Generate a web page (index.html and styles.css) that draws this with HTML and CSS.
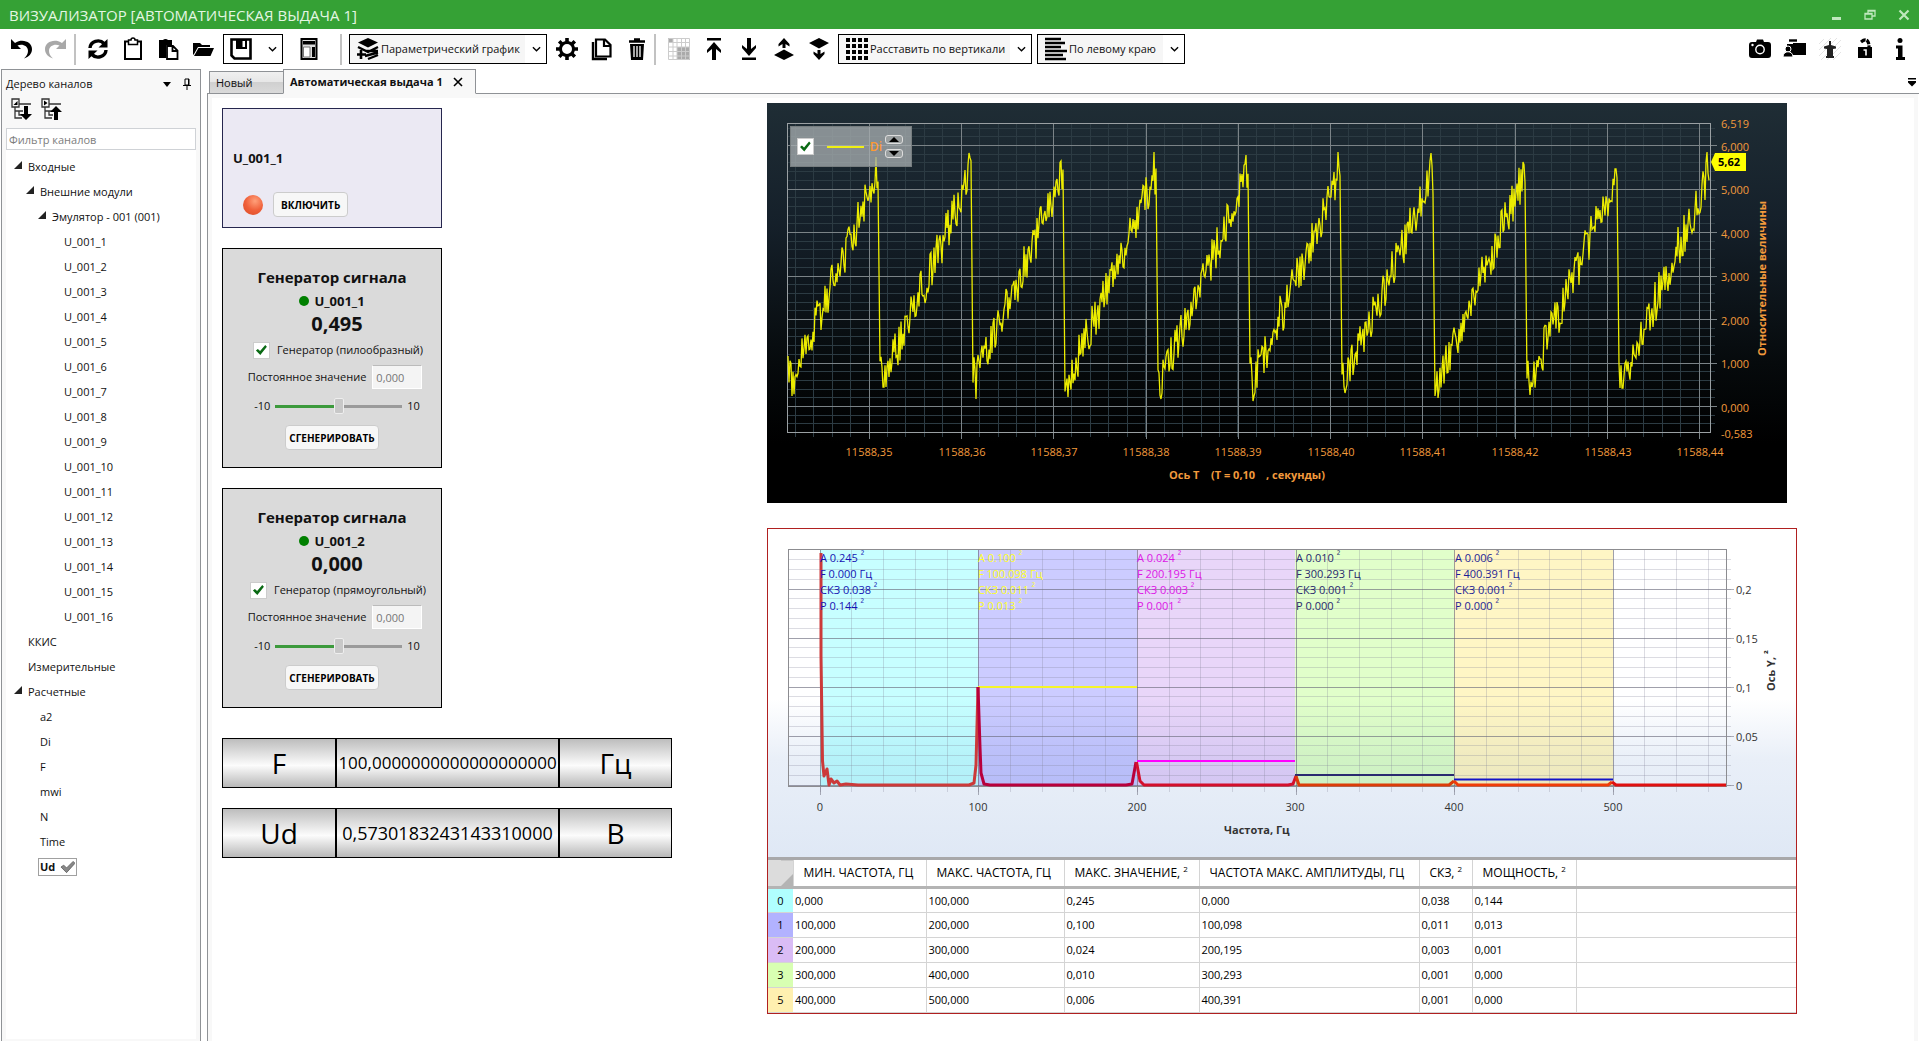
FILE: index.html
```html
<!DOCTYPE html>
<html lang="ru">
<head>
<meta charset="utf-8">
<title>Визуализатор</title>
<link rel="stylesheet" href="styles.css">
</head>
<body>
<header class="titlebar">
  <h1 class="titlebar-name">ВИЗУАЛИЗАТОР [АВТОМАТИЧЕСКАЯ ВЫДАЧА 1]</h1>
  <div class="window-buttons">
    <button aria-label="Свернуть"><svg viewBox="0 0 12 12"><path d="M2 8h9v3H2z" fill="#bfe8bd"/></svg></button>
    <button aria-label="Восстановить"><svg viewBox="0 0 12 12"><path d="M4 4V1.500h7V7H8.500M1 4.500h7V10H1zM4 2h7M1 5h7" fill="none" stroke="#bfe8bd" stroke-width="1.300"/></svg></button>
    <button aria-label="Закрыть"><svg viewBox="0 0 12 12"><path d="M1.500 1.500l9 9m0-9l-9 9" stroke="#bfe8bd" stroke-width="2.200"/></svg></button>
  </div>
</header>

<div class="toolbar">
  <div class="tool-group">
    <button class="tool" aria-label="Отменить"><svg viewBox="0 0 22 22"><path d="M1 1v10h10l-3.500-3.500C12 5.500 18 7.500 18 13c0 3-1.500 5-4 7.500 5-1.500 8-5 8-9.500C22 4.500 13 0 5 5z" /></svg></button>
    <button class="tool" aria-label="Повторить"><svg viewBox="0 0 22 22" fill="#a8a8a8"><path d="M21 1v10H11l3.500-3.500C10 5.500 4 7.500 4 13c0 3 1.500 5 4 7.500C3 19 0 15.500 0 11 0 4.500 9 0 17 5z"/></svg></button>
  </div>
  <span class="divider"></span>
  <div class="tool-group">
    <button class="tool" aria-label="Обновить"><svg viewBox="0 0 22 22"><path d="M3 10a8 7.500 0 0 1 14-4.500M19 12a8 7.500 0 0 1-14 4.500" fill="none" stroke="#000" stroke-width="3.400"/><path d="M20.500 1v8.500h-9zM1.500 21v-8.500h9z"/></svg></button>
    <button class="tool" aria-label="Буфер"><svg viewBox="0 0 22 22"><path d="M3 3.500h16v17.500H3z" fill="#fff" stroke="#000" stroke-width="2"/><path d="M6.500 2H9a2 2 0 0 1 4 0h2.500v4.500h-9z" fill="#fff" stroke="#000" stroke-width="1.500"/></svg></button>
    <button class="tool" aria-label="Вставить"><svg viewBox="0 0 22 22"><path d="M2 2h4a3 2 0 0 1 5 0h4v5H9v13H2z"/><path d="M10 8h6l4.500 4.500V21H10zM15.500 8v5H20" fill="#fff" stroke="#000" stroke-width="1.800"/></svg></button>
    <button class="tool" aria-label="Открыть"><svg viewBox="0 0 22 22"><path d="M1 17V5h7l2 2h8v2H6l-4 7z"/><path d="M6.500 10H22l-3.500 8H2z"/></svg></button>
  </div>
  <div class="boxed save-box">
    <button class="tool-in-box" aria-label="Сохранить"><svg viewBox="0 0 22 22"><path d="M1.500 1.500h19v19h-16l-3-3z" fill="#fff" stroke="#000" stroke-width="2.600"/><path d="M6 2h11v9H6z"/><path d="M12.500 3h2.500v6h-2.500z" fill="#fff"/></svg></button>
    <button class="chevron" aria-label="Варианты сохранения"><svg viewBox="0 0 10 6"><path d="M1 1l4 4 4-4" fill="none" stroke="#000" stroke-width="1.500"/></svg></button>
  </div>
  <button class="tool report" aria-label="Отчёт"><svg viewBox="0 0 22 22"><path d="M3.500 1h15v20h-15z" fill="#ddd" stroke="#000" stroke-width="2"/><path d="M5 3h12v3.500H5z"/><path d="M5.500 9h6.500v10H5.500z" fill="#fff" stroke="#777"/><path d="M14 9h3v10h-3z"/></svg></button>
  <span class="divider report-divider"></span>
  <div class="boxed combo combo-chart">
    <svg class="combo-icon" viewBox="0 0 22 22"><path d="M11 0l10 4.500-10 5-10-5z"/><path d="M1 9l10 5 10-5M9 13l12 0M8 18l13-3.500M11 21l10-4" fill="none" stroke="#000" stroke-width="2.400"/><path d="M4 12v9M0 16.500h9" stroke="#000" stroke-width="2.600"/></svg>
    <select aria-label="Тип графика"><option>Параметрический график</option></select>
    <svg class="combo-arrow" viewBox="0 0 10 6"><path d="M1 1l4 4 4-4" fill="none" stroke="#000" stroke-width="1.500"/></svg>
  </div>
  <div class="tool-group">
    <button class="tool" aria-label="Настройки"><svg viewBox="0 0 22 22"><circle cx="11" cy="11" r="6.500" fill="none" stroke="#000" stroke-width="3"/><path d="M11 0v4M11 18v4M0 11h4M18 11h4M3.200 3.200l3 3M15.800 15.800l3 3M3.200 18.800l3-3M15.800 6.200l3-3" stroke="#000" stroke-width="3.600"/></svg></button>
    <button class="tool" aria-label="Копировать"><svg viewBox="0 0 22 22"><path d="M2 4v17h14" fill="none" stroke="#000" stroke-width="2.400"/><path d="M5 1.500h9l5.500 5.500v11.500H5zM13 1.500V8h6" fill="#fff" stroke="#000" stroke-width="2.200"/></svg></button>
    <button class="tool" aria-label="Удалить"><svg viewBox="0 0 22 22"><path d="M3 3.500h16M8 1.500h6" stroke="#000" stroke-width="2.400"/><path d="M4 6h14l-1 16H5z"/><path d="M8 8v11M11 8v11M14 8v11" stroke="#fff" stroke-width="1.300"/></svg></button>
  </div>
  <span class="divider tight"></span>
  <div class="tool-group">
    <button class="tool" aria-label="Сетка"><svg viewBox="0 0 22 22"><path d="M0 0h5v4H0zM9 9h13v13H9z" fill="#aaa"/><path d="M.5 .5h21v21H.5zM5 0v22M9 0v22M13.500 0v22M17.500 0v22M0 4.500h22M0 9h22M0 13.500h22M0 18h22" fill="none" stroke="#ccc"/></svg></button>
    <button class="tool" aria-label="На передний план"><svg viewBox="0 0 22 22"><path d="M4 0h14v2.500H4zM11 4l7 8v3l-5-4v11H9V11l-5 4v-3z"/></svg></button>
    <button class="tool" aria-label="На задний план"><svg viewBox="0 0 22 22"><path d="M4 19.500h14V22H4zM11 18l7-8V7l-5 4V0H9v11L4 7v3z"/></svg></button>
    <button class="tool" aria-label="Переместить выше"><svg viewBox="0 0 22 22"><path d="M11 11.500L21 17l-10 5-10-5zM11 0l5.500 6v2.500L12.500 6v4h-3V6l-4 2.500V6z"/></svg></button>
    <button class="tool" aria-label="Переместить ниже"><svg viewBox="0 0 22 22"><path d="M11 0l10 5-10 5.500L1 5zM11 22l5.500-6v-2.500L12.500 16v-4h-3v4l-4-2.500V16z"/></svg></button>
  </div>
  <div class="boxed combo combo-place">
    <svg class="combo-icon" viewBox="0 0 22 22"><path d="M2 0v22M8 0v22M14 0v22M20 0v22" stroke="#000" stroke-width="4" stroke-dasharray="4 2"/></svg>
    <select aria-label="Расстановка"><option>Расставить по вертикали</option></select>
    <svg class="combo-arrow" viewBox="0 0 10 6"><path d="M1 1l4 4 4-4" fill="none" stroke="#000" stroke-width="1.500"/></svg>
  </div>
  <div class="boxed combo combo-align">
    <svg class="combo-icon" viewBox="0 0 22 22"><path d="M0 1h16M0 5h20M0 9h16M0 13h22M0 17h18M0 21h21" stroke="#000" stroke-width="2.400"/></svg>
    <select aria-label="Выравнивание"><option>По левому краю</option></select>
    <svg class="combo-arrow" viewBox="0 0 10 6"><path d="M1 1l4 4 4-4" fill="none" stroke="#000" stroke-width="1.500"/></svg>
  </div>
  <div class="tool-group tools-right">
    <button class="tool" aria-label="Снимок"><svg viewBox="0 0 22 22"><path d="M3 4h4l1-2.500h6L15 4h4a3 3 0 0 1 3 3v10a3 3 0 0 1-3 3H3a3 3 0 0 1-3-3V7a3 3 0 0 1 3-3z"/><circle cx="11" cy="11.500" r="4.200" fill="none" stroke="#fff" stroke-width="1.400"/><circle cx="3.500" cy="7" r="1.200" fill="#fff"/></svg></button>
    <button class="tool" aria-label="Папка пользователя"><svg viewBox="0 0 22 22"><path d="M3 6h6V5h13v12H3z"/><path d="M5 2.500h8" stroke="#000" stroke-width="2.400"/><circle cx="4" cy="11" r="3" stroke="#fff"/><path d="M-1 19c0-7 10-7 10 0z" stroke="#fff"/></svg></button>
    <button class="tool" aria-label="Закрепить"><svg viewBox="0 0 22 22"><path d="M0 6l5-5M0 12L12 0M0 18L18 0M2 22L22 2M8 22L22 8M14 22l8-8" stroke="#e4e4e4"/><path d="M10 3h2v4l5 1.500v2L14 11v7h1v2H7v-2h1v-7l-3-.5v-2L10 7z" fill="#222"/></svg></button>
    <button class="tool" aria-label="Блокировка"><svg viewBox="0 0 22 22"><path d="M4 9h14v11H4z"/><path d="M7 4c5-4 8-2 8 5" fill="none" stroke="#000" stroke-width="3.200" stroke-dasharray="5 1"/><path d="M9.500 12h2.500v5.500" fill="none" stroke="#fff" stroke-width="1.600"/></svg></button>
    <button class="tool" aria-label="Справка"><svg viewBox="0 0 22 22"><circle cx="11" cy="2.500" r="2.500"/><path d="M7 7.500h6.500V19H16v3H7v-3h2v-8.500H7z"/></svg></button>
  </div>
</div>

<main class="main">
  <aside class="tree-panel">
    <div class="tree-head">
      <h2>Дерево каналов</h2>
      <button aria-label="Меню панели"><svg viewBox="0 0 8 5"><path d="M0 0h8L4 5z"/></svg></button>
      <button aria-label="Закрепить панель"><svg viewBox="0 0 8 12"><path d="M2 1h4v6H2zM0 7.500h8M4 8v4M5.500 1v6" fill="none" stroke="#000"/></svg></button>
    </div>
    <div class="tree-tools">
      <button aria-label="Развернуть все"><svg viewBox="0 0 21 22"><path d="M1 1h7v8H1zM8 6h12M4 9v11h7M4 13h8M8 13v4h4" fill="none" stroke="#333" stroke-width="1.300"/><path d="M6.500 3v4h-4zM13 8h4v8h4l-6 6-6-6h4z"/></svg></button>
      <button aria-label="Свернуть все"><svg viewBox="0 0 21 22"><path d="M1 1h7v8H1zM8 6h12M4 9v11h7M4 13h8M8 13v4h4" fill="none" stroke="#333" stroke-width="1.300"/><path d="M3 2.500L6.500 5 3 7.500zM13 22h4v-8h4l-6-6-6 6h4z"/></svg></button>
    </div>
    <input class="tree-filter" type="text" placeholder="Фильтр каналов" aria-label="Фильтр каналов">
    <ul class="tree">
      <li><span class="node open">Входные</span>
        <ul>
          <li><span class="node open">Внешние модули</span>
            <ul>
              <li><span class="node open">Эмулятор - 001 (001)</span>
                <ul>
                  <li><span class="node">U_001_1</span></li>
                  <li><span class="node">U_001_2</span></li>
                  <li><span class="node">U_001_3</span></li>
                  <li><span class="node">U_001_4</span></li>
                  <li><span class="node">U_001_5</span></li>
                  <li><span class="node">U_001_6</span></li>
                  <li><span class="node">U_001_7</span></li>
                  <li><span class="node">U_001_8</span></li>
                  <li><span class="node">U_001_9</span></li>
                  <li><span class="node">U_001_10</span></li>
                  <li><span class="node">U_001_11</span></li>
                  <li><span class="node">U_001_12</span></li>
                  <li><span class="node">U_001_13</span></li>
                  <li><span class="node">U_001_14</span></li>
                  <li><span class="node">U_001_15</span></li>
                  <li><span class="node">U_001_16</span></li>
                </ul>
              </li>
            </ul>
          </li>
        </ul>
      </li>
      <li><span class="node">ККИС</span></li>
      <li><span class="node">Измерительные</span></li>
      <li><span class="node open">Расчетные</span>
        <ul>
          <li><span class="node">a2</span></li>
          <li><span class="node">Di</span></li>
          <li><span class="node">F</span></li>
          <li><span class="node">mwi</span></li>
          <li><span class="node">N</span></li>
          <li><span class="node">Time</span></li>
          <li><span class="node"><span class="selected">Ud <svg viewBox="0 0 16 12"><path d="M1 6l3-2 3 3 7-7 2 2-9 10z" fill="#888" stroke="#555" stroke-width=".8"/></svg></span></span></li>
        </ul>
      </li>
    </ul>
  </aside>

  <section class="document">
    <div class="tabs">
      <button class="tab">Новый</button>
      <div class="tab active"><span>Автоматическая выдача 1</span><button aria-label="Закрыть вкладку"><svg viewBox="0 0 10 10"><path d="M1 1l8 8m0-8L1 9" stroke="#000" stroke-width="1.600"/></svg></button></div>
      <button class="tab-menu" aria-label="Список вкладок"><svg viewBox="0 0 8 9"><path d="M0 0h8v1.500H0zM0 3h8v1.500L4 8.500 0 4.500z"/></svg></button>
    </div>

    <div class="workspace">
      <div class="controls">
        <article class="card switch-card">
          <h3>U_001_1</h3>
          <div class="switch-row"><span class="led"></span><button class="push">ВКЛЮЧИТЬ</button></div>
        </article>

        <article class="card generator">
          <h3>Генератор сигнала</h3>
          <p class="source"><span class="dot"></span>U_001_1</p>
          <p class="value">0,495</p>
          <label class="mode"><input class="check" type="checkbox" checked>Генератор (пилообразный)</label>
          <label class="constant">Постоянное значение<input type="text" value="0,000" disabled></label>
          <label class="range"><span>-10</span><input type="range" min="-10" max="10" value="0" aria-label="Постоянное значение"><span>10</span></label>
          <button class="push">СГЕНЕРИРОВАТЬ</button>
        </article>

        <article class="card generator">
          <h3>Генератор сигнала</h3>
          <p class="source"><span class="dot"></span>U_001_2</p>
          <p class="value">0,000</p>
          <label class="mode"><input class="check" type="checkbox" checked>Генератор (прямоугольный)</label>
          <label class="constant">Постоянное значение<input type="text" value="0,000" disabled></label>
          <label class="range"><span>-10</span><input type="range" min="-10" max="10" value="0" aria-label="Постоянное значение"><span>10</span></label>
          <button class="push">СГЕНЕРИРОВАТЬ</button>
        </article>

        <div class="readouts">
          <div class="readout"><span>F</span><output class="long">100,0000000000000000000</output><span>Гц</span></div>
          <div class="readout"><span>Ud</span><output>0,5730183243143310000</output><span>В</span></div>
        </div>
      </div>

      <div class="charts">
        <figure class="scope">
          <svg class="plot" viewBox="0 0 1020 400" role="img" aria-label="Осциллограмма Di">
            <path id="scope-minor" class="scope-minor"/>
            <path id="scope-major" class="scope-major"/>
            <rect class="scope-frame" x="20.500" y="20.500" width="923" height="309"/>
            <path id="scope-wave" class="scope-wave"/>
            <g class="scope-text" text-anchor="middle">
              <text x="102" y="353">11588,35</text><text x="195" y="353">11588,36</text><text x="287" y="353">11588,37</text><text x="379" y="353">11588,38</text><text x="471" y="353">11588,39</text><text x="564" y="353">11588,40</text><text x="656" y="353">11588,41</text><text x="748" y="353">11588,42</text><text x="841" y="353">11588,43</text><text x="933" y="353">11588,44</text>
            </g>
            <g class="scope-text">
              <text x="954" y="25">6,519</text><text x="954" y="48">6,000</text><text x="954" y="91">5,000</text><text x="954" y="135">4,000</text><text x="954" y="178">3,000</text><text x="954" y="222">2,000</text><text x="954" y="265">1,000</text><text x="954" y="309">0,000</text><text x="954" y="335">-0,583</text>
            </g>
            <text class="scope-text axis-name" x="402" y="376">Ось Т</text>
            <text class="scope-text axis-name" x="444" y="376">(T = 0,10</text>
            <text class="scope-text axis-name" x="499" y="376">, секунды)</text>
            <text class="scope-text axis-name" transform="translate(999 253) rotate(-90)">Относительные величины</text>
            <path d="M944 59l4-9h31v18h-31z" fill="#ff0"/>
            <text class="tag" x="951" y="63">5,62</text>
          </svg>
          <div class="legend">
            <input class="check" type="checkbox" checked aria-label="Di">
            <span class="legend-line"></span><span class="legend-name">Di</span>
            <span class="legend-spin">
              <button aria-label="Выше"><svg viewBox="0 0 12 6"><path d="M0 6l6-6 6 6z"/></svg></button>
              <button aria-label="Ниже"><svg viewBox="0 0 12 6"><path d="M0 0l6 6 6-6z"/></svg></button>
            </span>
          </div>
        </figure>

        <div class="spectrum">
          <svg class="plot" viewBox="0 0 1028 328" role="img" aria-label="Спектр">
            <g>
              <rect x="52" y="21" width="158" height="237" fill="#00ffff" fill-opacity=".22"/>
              <rect x="210" y="21" width="159" height="237" fill="#0000ff" fill-opacity=".2"/>
              <rect x="369" y="21" width="158" height="237" fill="#9030e0" fill-opacity=".2"/>
              <rect x="527" y="21" width="159" height="237" fill="#80ff20" fill-opacity=".24"/>
              <rect x="686" y="21" width="159" height="237" fill="#ffe040" fill-opacity=".3"/>
            </g>
            <path id="spec-minor" class="spec-minor"/>
            <path id="spec-major" class="spec-major"/>
            <rect class="spec-frame" x="20.500" y="20.500" width="938" height="237"/>
            <g fill="none" stroke-width="2">
              <path d="M210 158h159" stroke="#f5f52a"/><path d="M369 232h158" stroke="#f0f"/><path d="M527 246h159" stroke="#2a2a70"/><path d="M686 250.500h159" stroke="#1414c8"/>
            </g>
            <g fill="none" stroke-width="3" stroke-linejoin="round">
              <path d="M53 24V127L54.500 232 56 247 59 240 61 256 63 250 66 254 69 252 72 256 78 255 90 256H201L206 254 208 236 210 158" stroke="#cc3a3a"/>
              <path d="M210 158L212 218 213 244 216 255 222 256H358L364 255 368 233" stroke="#b8003c"/>
              <path d="M368.500 233L372 252 376 256H520L525 255 528 247" stroke="#d40f2c"/>
              <path d="M528 247L531 256H681L686 252" stroke="#dc3c08"/>
              <path d="M686 252L690 256H840L844 253" stroke="#f03c08"/>
              <path d="M844 253L848 256H958" stroke="#e01010"/>
            </g>
            <g class="band-text" fill="#1414b4"><text x="52" y="33">A 0.245 <tspan class="sq" dy="-3">²</tspan></text><text x="52" y="49">F 0.000 Гц</text><text x="52" y="65">СКЗ 0.038 <tspan class="sq" dy="-3">²</tspan></text><text x="52" y="81">P 0.144 <tspan class="sq" dy="-3">²</tspan></text></g>
            <g class="band-text" fill="#ffff28"><text x="210" y="33">A 0.100 <tspan class="sq" dy="-3">²</tspan></text><text x="210" y="49">F 100.098 Гц</text><text x="210" y="65">СКЗ 0.011 <tspan class="sq" dy="-3">²</tspan></text><text x="210" y="81">P 0.013 <tspan class="sq" dy="-3">²</tspan></text></g>
            <g class="band-text" fill="#dc14e6"><text x="369" y="33">A 0.024 <tspan class="sq" dy="-3">²</tspan></text><text x="369" y="49">F 200.195 Гц</text><text x="369" y="65">СКЗ 0.003 <tspan class="sq" dy="-3">²</tspan></text><text x="369" y="81">P 0.001 <tspan class="sq" dy="-3">²</tspan></text></g>
            <g class="band-text" fill="#28286e"><text x="528" y="33">A 0.010 <tspan class="sq" dy="-3">²</tspan></text><text x="528" y="49">F 300.293 Гц</text><text x="528" y="65">СКЗ 0.001 <tspan class="sq" dy="-3">²</tspan></text><text x="528" y="81">P 0.000 <tspan class="sq" dy="-3">²</tspan></text></g>
            <g class="band-text" fill="#1e1e96"><text x="687" y="33">A 0.006 <tspan class="sq" dy="-3">²</tspan></text><text x="687" y="49">F 400.391 Гц</text><text x="687" y="65">СКЗ 0.001 <tspan class="sq" dy="-3">²</tspan></text><text x="687" y="81">P 0.000 <tspan class="sq" dy="-3">²</tspan></text></g>
            <g class="spec-text" text-anchor="middle"><text x="52" y="282">0</text><text x="210" y="282">100</text><text x="369" y="282">200</text><text x="527" y="282">300</text><text x="686" y="282">400</text><text x="845" y="282">500</text></g>
            <g class="spec-text"><text x="968" y="65">0,2</text><text x="968" y="114">0,15</text><text x="968" y="163">0,1</text><text x="968" y="212">0,05</text><text x="968" y="261">0</text></g>
            <text class="spec-text axis-name" x="456" y="305">Частота, Гц</text>
            <text class="spec-text axis-name" transform="translate(1007 162) rotate(-90)">Ось Y, <tspan class="sq" dy="-3">²</tspan></text>
          </svg>
          <table class="bands">
            <colgroup><col class="c-index"><col class="c-min"><col class="c-max"><col class="c-val"><col class="c-freq"><col class="c-rms"><col class="c-pow"><col></colgroup>
            <thead><tr><th class="corner"></th><th>МИН. ЧАСТОТА, ГЦ</th><th>МАКС. ЧАСТОТА, ГЦ</th><th>МАКС. ЗНАЧЕНИЕ, <sup>2</sup></th><th>ЧАСТОТА МАКС. АМПЛИТУДЫ, ГЦ</th><th>СКЗ, <sup>2</sup></th><th>МОЩНОСТЬ, <sup>2</sup></th><th></th></tr></thead>
            <tbody>
              <tr><th class="b0">0</th><td>0,000</td><td>100,000</td><td>0,245</td><td>0,000</td><td>0,038</td><td>0,144</td><td></td></tr>
              <tr><th class="b1">1</th><td>100,000</td><td>200,000</td><td>0,100</td><td>100,098</td><td>0,011</td><td>0,013</td><td></td></tr>
              <tr><th class="b2">2</th><td>200,000</td><td>300,000</td><td>0,024</td><td>200,195</td><td>0,003</td><td>0,001</td><td></td></tr>
              <tr><th class="b3">3</th><td>300,000</td><td>400,000</td><td>0,010</td><td>300,293</td><td>0,001</td><td>0,000</td><td></td></tr>
              <tr><th class="b5">5</th><td>400,000</td><td>500,000</td><td>0,006</td><td>400,391</td><td>0,001</td><td>0,000</td><td></td></tr>
            </tbody>
          </table>
        </div>
      </div>
    </div>
  </section>
</main>
<footer class="taskbar"></footer>
<script src="charts.js"></script>
</body>
</html>
```
FILE: styles.css
```css
* { box-sizing: border-box; }
body {
  margin: 0;
  min-height: 100vh;
  display: flex;
  flex-direction: column;
  background: #fff;
  color: #111;
  font: 11px/16px "Open Sans", "Noto Sans", sans-serif;
}
h1, h2, h3, p, ul, figure { margin: 0; padding: 0; font-size: inherit; font-weight: normal; }
ul { list-style: none; }
svg { display: block; }
button, select, input { font: inherit; color: inherit; margin: 0; }
button { background: none; border: 0; padding: 0; }

/* Title bar */
.titlebar {
  display: flex;
  align-items: center;
  justify-content: space-between;
  height: 29px;
  padding: 0 9px;
  background: #35a135;
  color: #e4f6e3;
}
.titlebar-name { font-size: 15px; line-height: 20px; }
.window-buttons { display: flex; gap: 22px; }
.window-buttons svg { width: 12px; height: 12px; }

/* Toolbar */
.toolbar { display: flex; align-items: center; height: 40px; padding: 0 2px 0 3px; }
.tool-group { display: flex; }
.tool { display: flex; align-items: center; justify-content: center; width: 35px; height: 30px; }
.tool svg { width: 22px; height: 22px; overflow: visible; }
.divider { width: 2px; height: 31px; margin: 0 4px 0 1px; background: #c2c2c2; }
.report-divider { margin: 0 7px 0 14px; }
.divider.tight { margin: 0 5px 0 0; }
.boxed { display: flex; align-items: center; height: 30px; border: 1px solid #000; background: #fff; }
.save-box { width: 60px; margin: 0 8px 0 3px; padding: 0 5px 0 6px; justify-content: space-between; }
.save-box .tool-in-box svg { width: 22px; height: 22px; }
.chevron svg, .combo-arrow { width: 9px; height: 6px; }
.combo { padding: 0 5px 0 7px; background: linear-gradient(90deg, #f6f6f6 calc(100% - 21px), #fff 0); }
.combo-icon { flex: none; width: 22px; height: 22px; overflow: visible; }
.combo select {
  flex: 1;
  min-width: 0;
  padding: 0 0 0 2px;
  border: 0;
  background: none;
  appearance: none;
  line-height: 20px;
}
.combo-arrow { flex: none; }
.combo-chart { width: 198px; margin-right: 2px; }
.combo-place { width: 194px; margin: 0 5px 0 2px; }
.combo-align { width: 148px; }
.tools-right { margin-left: auto; }

/* Main area */
.main { flex: 1; display: flex; gap: 6px; padding: 0 0 0 1px; }
.tree-panel { flex: 0 0 200px; margin-bottom: 2px; padding: 5px 4px 4px; border: 1px solid #8f9296; background: #f8f8f8; }
.tree-head { display: flex; align-items: center; gap: 12px; height: 18px; padding-right: 5px; }
.tree-head h2 { flex: 1; }
.tree-head svg { width: 8px; }
.tree-tools { display: flex; gap: 9px; padding: 5px 5px 8px; }
.tree-tools svg { width: 21px; height: 22px; }
.tree-filter { display: block; width: 100%; height: 22px; padding: 0 2px; border: 1px solid #cfd2d6; background: #fff; }
.tree-filter::placeholder { color: #7d7d7d; opacity: 1; }
.tree { padding: 4px 0 160px 8px; background: #fff; }
.tree ul { padding-left: 12px; }
.node { display: flex; align-items: center; height: 25px; padding-left: 14px; white-space: nowrap; }
.node.open { padding-left: 0; }
.node.open::before { content: ""; width: 8px; height: 8px; margin: 0 6px 3px 0; background: #222; clip-path: polygon(100% 0, 100% 100%, 0 100%); }
.selected { display: flex; align-items: center; gap: 5px; height: 18px; margin-left: -2px; padding: 0 1px; border: 1px solid #a0a0a0; font-weight: bold; }
.selected svg { width: 15px; height: 12px; }

.document { flex: 1; min-width: 0; display: flex; flex-direction: column; }
.tabs { display: flex; align-items: flex-end; height: 25px; padding: 0 2px; }
.tab { height: 23px; padding: 0 6px; border: 1px solid #8f9296; background: linear-gradient(#f0f0f0, #e6e6e6 50%, #d0d0d0 50%, #dadada); text-align: left; }
button.tab { width: 75px; margin-right: -1px; }
.tab.active { display: flex; align-items: center; gap: 10px; height: 25px; border-bottom-color: #f8f8f8; background: #f8f8f8; font-weight: bold; z-index: 1; padding-right: 12px; }
.tab.active svg { width: 10px; height: 10px; }
.tab-menu { margin: 0 1px 7px auto; }
.tab-menu svg { width: 8px; height: 9px; }
.workspace {
  flex: 1;
  display: flex;
  gap: 95px;
  margin-top: -1px;
  padding: 10px 122px 21px 14px;
  border: 1px solid #8f9296;
  border-right: 0;
  outline: 4px solid #f8f8f8;
  outline-offset: -5px;
}

/* Control widgets */
.controls { flex: none; width: 450px; padding-top: 4px; display: flex; flex-direction: column; gap: 20px; }
.card { width: 220px; border: 1px solid #000; }
.switch-card { height: 120px; padding: 40px 10px 10px; border-color: #26264e; background: #ebe9f3; }
.switch-card h3 { font-size: 13px; line-height: 18px; font-weight: bold; }
.switch-row { display: flex; align-items: center; gap: 10px; margin-top: 25px; padding-left: 10px; }
.led { width: 20px; height: 20px; border-radius: 50%; background: radial-gradient(circle at 60% 30%, #ffa07a, #f0603a 50%, #d94a26); }
.push { height: 25px; padding: 0 7px; border: 1px solid #ccc; border-radius: 4px; background: #f7f7f7; font-size: 10px; font-weight: bold; color: #000; }
.generator { height: 220px; padding-top: 15px; display: flex; flex-direction: column; align-items: center; background: #dadada; }
.generator h3 { font-size: 15px; line-height: 26px; font-weight: bold; }
.source { display: flex; align-items: center; gap: 5px; font-size: 13px; line-height: 22px; font-weight: bold; }
.dot { width: 10px; height: 10px; border-radius: 50%; background: #008000; }
.value { padding-left: 10px; font-size: 20px; line-height: 24px; font-weight: bold; }
.mode { display: flex; align-items: center; gap: 7px; height: 28px; padding-left: 12px; }
.check { position: relative; appearance: none; width: 17px; height: 17px; border: 1px solid #ccc; background: #fff; }
.check:checked::before { content: ""; position: absolute; inset: 2px; background: #0a6a14; clip-path: polygon(0 55%, 18% 40%, 38% 60%, 85% 5%, 100% 20%, 40% 95%); }
.constant { display: flex; align-items: center; gap: 6px; height: 26px; padding-left: 6px; }
.constant input { width: 50px; height: 24px; padding: 0 3px; border: 1px solid #fff; border-top-color: #bbb; background: #f4f4f4; color: #777; }
.range { display: flex; align-items: center; gap: 5px; height: 32px; padding-left: 10px; }
.range input { width: 127px; height: 16px; appearance: none; background: linear-gradient(90deg, #3c9a3c 50%, #9a9a9a 50%) center / 100% 3px no-repeat; }
.range input::-webkit-slider-thumb { appearance: none; width: 10px; height: 16px; border: 1px solid #eee; border-radius: 2px; background: #c8c8c8; }
.generator .push { margin-top: 3px; padding: 0 3px; }

.readouts { display: flex; flex-direction: column; gap: 20px; margin-top: 10px; }
.readout { display: grid; grid-template-columns: 112px 1fr 111px; height: 50px; border: 1px solid #000; color: #000; }
.readout > * { display: flex; align-items: center; justify-content: center; background: linear-gradient(#bdbdbd, #fcfcfc 55%, #b8b8b8); }
.readout span { font-size: 28px; }
.readout output { border: solid #000; border-width: 0 2px; font-size: 18px; }
.readout output.long { font-size: 17px; }

/* Charts */
.charts { flex: 1; min-width: 0; display: flex; flex-direction: column; gap: 25px; }
.plot { width: 100%; height: auto; font-size: 11px; }
.axis-name { font-weight: bold; }
.sq { font-size: 10px; }
.scope { position: relative; margin-right: 10px; margin-top: -1px; background: linear-gradient(#1f2d35, #15202a 30%, #060a0c 65%, #000 85%); }
.scope-minor { fill: none; stroke: #2c3b43; }
.scope-major { fill: none; stroke: #7b8387; }
.scope-frame { fill: none; stroke: #9aa0a3; }
.scope-wave { fill: none; stroke: #ecec00; stroke-width: 1.3; }
.scope-text { fill: #f29a3c; }
.tag { font-weight: bold; fill: #000; }
.legend {
  position: absolute;
  left: 23px;
  top: 23px;
  display: flex;
  align-items: center;
  width: 122px;
  height: 41px;
  padding: 0 8px 0 6px;
  border: 1px solid #777e80;
  background: rgba(165, 172, 174, .78);
}
.legend-line { width: 38px; height: 2px; margin: 0 6px 0 13px; background: #f0f014; }
.legend-name { color: #ff9a30; font-size: 12px; font-weight: 600; }
.legend-spin { display: flex; flex-direction: column; gap: 5px; margin-left: 3px; }
.legend-spin button { width: 18px; height: 9px; padding: 1px 2px; border: 1px solid #ddd; border-radius: 3px; background: #9a9fa0; }
.legend-spin svg { width: 12px; height: 5px; }

.spectrum { border: 1px solid #b02020; background: linear-gradient(#fff 170px, #e9eff8 230px, #dfe8f5 328px); }
.spec-minor { fill: none; stroke: rgba(130, 130, 150, .28); }
.spec-major { fill: none; stroke: rgba(100, 100, 115, .5); }
.spec-frame { fill: none; stroke: #8c8c90; }
.spec-text { fill: #333; }

.bands { width: 100%; border-collapse: collapse; table-layout: fixed; background: #fff; color: #000; }
.c-index { width: 25px; }
.c-min { width: 133px; }
.c-max { width: 138px; }
.c-val { width: 135px; }
.c-freq { width: 220px; }
.c-rms { width: 53px; }
.c-pow { width: 104px; }
.bands th, .bands td { height: 25px; padding: 0 2px; border: 1px solid #d4d4d4; border-left: 0; text-align: left; font-weight: normal; white-space: nowrap; }
.bands tbody th { text-align: center; padding: 0; border-right: 0; }
.bands tr > :last-child { border-right: 0; }
.bands thead th { height: 29px; padding: 0 0 0 10px; border-top: 3px solid #a8a8aa; border-bottom: 3px solid #b4b4b4; font-size: 12px; }
.bands sup { font-size: 8px; line-height: 8px; }
.bands thead .corner { background: linear-gradient(135deg, #dcdcdc 75%, #b4b4b4 75%); }
.bands .b0 { background: #b0ffff; }
.bands .b1 { background: #b2b2ff; }
.bands .b2 { background: #dabcf5; }
.bands .b3 { background: #d8ffb2; }
.bands .b5 { background: #fff0b0; }

.taskbar { height: 3px; border-top: 1px solid #24384c; background: #7fb0d2; }
```
FILE: charts.js
```js
// Grid lines: one path per weight, with ticks that run past the plot frame.
function gridPath(x0, xStep, xMin, xMax, y0, yStep, yMin, yMax, tick) {
  let d = "";
  for (let x = x0; x <= xMax; x += xStep) {
    if (x >= xMin) d += `M${Math.floor(x) + 0.5} ${yMin}V${yMax + tick}`;
  }
  for (let y = y0; y >= yMin; y -= yStep) {
    if (y <= yMax) d += `M${xMin} ${Math.floor(y) + 0.5}H${xMax + tick}`;
  }
  return d;
}
function setPath(id, d) {
  document.getElementById(id).setAttribute("d", d);
}
setPath("scope-minor", gridPath(28.2, 18.45, 21, 943, 320.9, 8.7, 21, 329, 5));
setPath("scope-major", gridPath(102.2, 92.27, 21, 943, 303.5, 43.5, 21, 329, 7));
setPath("spec-minor", gridPath(52.2, 31.72, 21, 958, 256.2, 9.8, 21, 258, 5));
setPath("spec-major", gridPath(52.2, 158.6, 21, 958, 256.2, 49, 21, 258, 8));

// Sawtooth with noise: [start x, end x, lowest y, highest y] of each tooth.
const teeth = [
  [21, 112, 293, 54], [112, 205, 284, 50], [205, 297, 296, 58],
  [297, 390, 294, 49], [390, 482, 296, 52], [482, 574, 298, 49],
  [574, 667, 290, 50], [667, 759, 295, 59], [759, 851, 292, 66], [851, 943, 285, 49]
];
let seed = 20;
function noise() {
  seed = (seed * 16807) % 2147483647;
  return seed / 2147483647 - 0.5;
}
let wave = "";
teeth.forEach(([start, end, low, high], i) => {
  const length = end - start;
  for (let x = i ? 1 : 0; x <= length - 1; x += 1) {
    const t = x / length;
    let y = 274 - Math.max(0, t - 0.06) * 218 + noise() * 42;
    if (x === 4) y = low;
    if (x === length - 3) y = high;
    y = Math.min(low, Math.max(high, y));
    wave += `${wave ? "L" : "M"}${start + x} ${y.toFixed(1)}`;
  }
});
setPath("scope-wave", wave);
```
